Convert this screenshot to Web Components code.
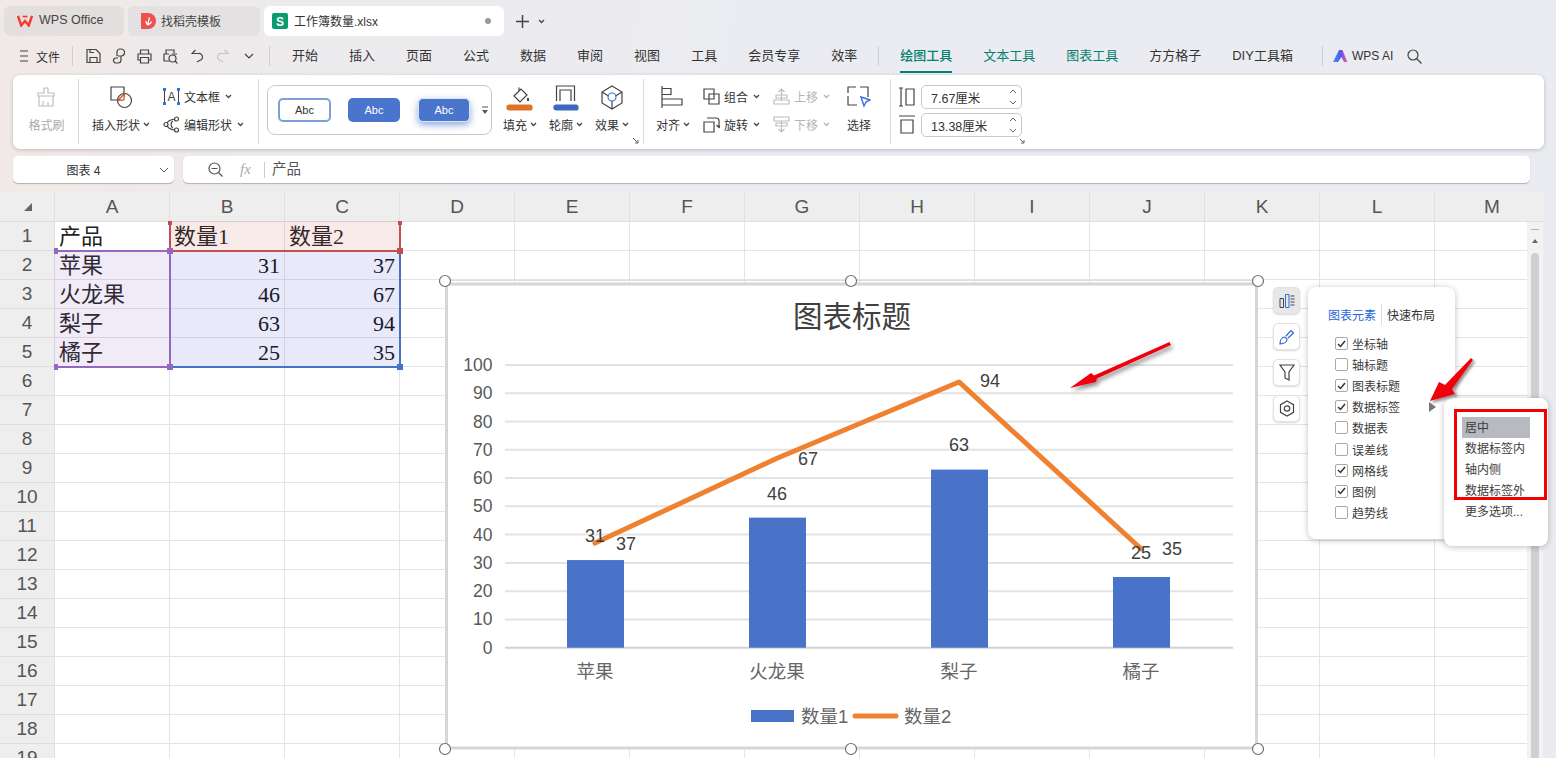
<!DOCTYPE html>
<html lang="zh">
<head>
<meta charset="utf-8">
<title>WPS</title>
<style>
  html, body { margin: 0; height: 100%; }
  body {
    width: 1556px; height: 758px; overflow: hidden;
    display: flex; flex-direction: column;
    background: linear-gradient(100deg, #f1e9e7 0, #ecebee 22%, #ebecf1 45%);
    font-family: "Liberation Sans", "Noto Sans CJK SC", sans-serif;
    color: #333;
  }
</style>
</head>
<body>
<wps-tabbar></wps-tabbar>
<wps-menubar></wps-menubar>
<wps-ribbon></wps-ribbon>
<wps-formula></wps-formula>
<wps-sheet></wps-sheet>

<script>
const caret = (c = "#444") => `<svg class="caret" width="7" height="5" viewBox="0 0 7 5"><path d="M1 1l2.5 2.5L6 1" fill="none" stroke="${c}" stroke-width="1.3"/></svg>`;

class WpsTabbar extends HTMLElement {
  constructor() {
    super();
    this.attachShadow({ mode: "open" });
    this.shadowRoot.innerHTML = `
      <style>
        :host { display: flex; height: 37px; padding: 6px 0 0 4px; box-sizing: border-box; gap: 4px; font-size: 12px; flex: none; }
        .tab { height: 30px; border-radius: 6px; background: #e3dfde; display: flex; align-items: center; box-sizing: border-box; color: #444; }
        .tab span { margin-bottom: 2px; }
        .a { width: 120px; padding-left: 13px; gap: 6px; font-size: 12.5px; }
        .b { width: 132px; padding-left: 13px; gap: 5px; background: #e4e1e2; }
        .c { width: 240px; padding-left: 8px; gap: 6px; background: #fff; color: #333; }
        .dot { width: 6px; height: 6px; border-radius: 50%; background: #999; margin-left: auto; margin-right: 13px; }
        .add { display: flex; align-items: center; gap: 8px; margin-left: 7px; }
      </style>
      <div class="tab a">
        <svg width="16" height="12" viewBox="0 0 16 12"><path d="M1 1l3.2 9.5L8 6l3.8 4.5L15 1" fill="none" stroke="#f4392d" stroke-width="2.4"/><path d="M5.5 1.5h5" stroke="#f4392d" stroke-width="1.6"/></svg>
        <span>WPS Office</span>
      </div>
      <div class="tab b">
        <svg width="15" height="16" viewBox="0 0 15 16"><path d="M0 0h7a8 8 0 0 1 0 16H0z" fill="#ef4f4f"/><path d="M7 12.5c0-3 .5-5 1.5-8M7 12c-1.5-1-2-2.200-2-4M7.500 11.500c1.500-.5 2.500-1.500 3-3" fill="none" stroke="#fff" stroke-width="1.3"/></svg>
        <span>找稻壳模板</span>
      </div>
      <div class="tab c">
        <svg width="16" height="16" viewBox="0 0 16 16"><rect width="16" height="16" rx="2" fill="#0a9b70"/><text x="8" y="12.500" text-anchor="middle" font-size="12" font-weight="700" fill="#fff" font-family="Liberation Sans">S</text></svg>
        <span>工作簿数量.xlsx</span>
        <i class="dot"></i>
      </div>
      <div class="add">
        <svg width="15" height="15" viewBox="0 0 15 15"><path d="M7.500 1v13M1 7.500h13" stroke="#444" stroke-width="1.500"/></svg>
        ${caret()}
      </div>`;
  }
}
customElements.define("wps-tabbar", WpsTabbar);

class WpsMenubar extends HTMLElement {
  constructor() {
    super();
    this.attachShadow({ mode: "open" });
    const tabs = ["开始", "插入", "页面", "公式", "数据", "审阅", "视图", "工具", "会员专享", "效率"];
    this.shadowRoot.innerHTML = `
      <style>
        :host { display: flex; align-items: center; height: 38px; flex: none; padding-left: 20px; box-sizing: border-box; font-size: 13px; color: #333; }
        svg { display: block; fill: none; stroke: #444; stroke-width: 1.200; }
        .file { font-size: 12px; margin-left: 8px; }
        .sep { width: 1px; height: 20px; background: #cfcfcf; flex: none; }
        .qa { display: flex; align-items: center; gap: 11px; margin: 0 15px 0 13px; }
        .tabs { display: flex; gap: 31px; }
        .tabs span { position: relative; line-height: 20px; }
        .teal { color: #05806f; }
        .on { color: #05806f; font-weight: 500; }
        .on::after { content: ""; position: absolute; left: 0; right: 0; bottom: -7px; height: 2px; background: #05806f; }
        .ai { display: flex; align-items: center; gap: 4px; font-size: 12px; margin-left: 10px; }
        .search { margin-left: 14px; }
      </style>
      <svg width="8" height="12" viewBox="0 0 8 12"><path d="M0 1h8M0 6h8M0 11h8"/></svg>
      <span class="file">文件</span>
      <i class="sep" style="margin-left:12px"></i>
      <div class="qa">
        <svg width="15" height="16" viewBox="0 0 15 16"><path d="M1 1.500h9l4 4v9H1zM4 14.500v-5h7v5M4 1.500v3h4"/></svg>
        <svg width="14" height="16" viewBox="0 0 14 16"><path d="M5 8V4a3 3 0 0 1 3-3h1a3.500 3.500 0 0 1 0 7H5.500M9 8v4a3 3 0 0 1-3 3H4a2.500 2.500 0 0 1 0-5h2"/></svg>
        <svg width="15" height="15" viewBox="0 0 15 15"><path d="M3.500 5V1h8v4M3.500 11H1V5h13v6h-2.500M3.500 8.500h8V14h-8z"/></svg>
        <svg width="15" height="15" viewBox="0 0 15 15"><path d="M3 5V1h8v3M6 12H1V5h5M9 5h5"/><circle cx="9.500" cy="9.500" r="3.500"/><path d="M12 12l2.500 2.500"/></svg>
        <svg width="12" height="14" viewBox="0 0 12 14" style="margin-left:2px"><path d="M4.500 1L1 4.500h6.500a3.500 3.500 0 0 1 1 7L6 13"/></svg>
        <svg width="12" height="14" viewBox="0 0 12 14" style="stroke:#c4c4c4;margin-left:3px"><path d="M7.500 1L11 4.500H4.500a3.500 3.500 0 0 0-1 7L6 13"/></svg>
        <svg width="10" height="6" viewBox="0 0 10 6" style="margin-left:4px"><path d="M1 1l4 4 4-4"/></svg>
      </div>
      <i class="sep"></i>
      <div class="tabs" style="margin-left:22px">
        ${tabs.map(t => `<span>${t}</span>`).join("")}
      </div>
      <i class="sep" style="margin:0 21px"></i>
      <div class="tabs">
        <span class="on">绘图工具</span><span class="teal">文本工具</span><span class="teal">图表工具</span><span>方方格子</span><span>DIY工具箱</span>
      </div>
      <i class="sep" style="margin-left:29px"></i>
      <div class="ai">
        <svg width="15" height="12" viewBox="0 0 15 12" style="stroke:none"><defs><linearGradient id="g" x1="0" x2="1"><stop offset="0" stop-color="#3f8cff"/><stop offset=".55" stop-color="#5a55e8"/><stop offset="1" stop-color="#ff5fa0"/></linearGradient></defs><path d="M0 12L6 0h3.500l5 12h-3.500L8.500 7 5 12z" fill="url(#g)"/></svg>
        <span>WPS AI</span>
      </div>
      <svg class="search" width="15" height="15" viewBox="0 0 15 15"><circle cx="6" cy="6" r="5"/><path d="M9.500 9.500l5 5"/></svg>`;
  }
}
customElements.define("wps-menubar", WpsMenubar);

// big ribbon button: icon on top, label under it
class RbBig extends HTMLElement {
  constructor() {
    super();
    this.attachShadow({ mode: "open" });
    this.shadowRoot.innerHTML = `
      <style>
        :host { display: flex; flex-direction: column; align-items: center; font-size: 12px; color: #333; flex: none; }
        :host([off]) { color: #aaa; }
        .ic { height: 34px; display: flex; align-items: center; justify-content: center; }
        .lb { height: 20px; display: flex; align-items: center; gap: 3px; white-space: nowrap; }
      </style>
      <div class="ic"><slot></slot></div>
      <div class="lb"><span></span>${this.hasAttribute("nocaret") ? "" : caret()}</div>`;
  }
  connectedCallback() {
    this.shadowRoot.querySelector(".lb span").textContent = this.getAttribute("label");
  }
}
customElements.define("rb-big", RbBig);

// small ribbon button: icon left, label right
class RbSmall extends HTMLElement {
  constructor() {
    super();
    this.attachShadow({ mode: "open" });
    this.shadowRoot.innerHTML = `
      <style>
        :host { display: flex; align-items: center; height: 20px; font-size: 12px; color: #333; white-space: nowrap; }
        :host([off]) { color: #b5b5b5; }
        .ic { display: flex; width: 21px; flex: none; }
        .cr { margin-left: 5px; display: flex; }
      </style>
      <div class="ic"><slot></slot></div>
      <span></span><div class="cr">${caret(this.hasAttribute("off") ? "#b5b5b5" : "#444")}</div>`;
  }
  connectedCallback() {
    this.shadowRoot.querySelector("span").textContent = this.getAttribute("label");
  }
}
customElements.define("rb-small", RbSmall);

class RbSize extends HTMLElement {
  constructor() {
    super();
    this.attachShadow({ mode: "open" });
    this.shadowRoot.innerHTML = `
      <style>
        :host { display: flex; align-items: center; width: 101px; height: 24px; box-sizing: border-box; border: 1px solid #c9c9c9; border-radius: 5px; padding-left: 9px; font-size: 12.500px; color: #333; }
        svg { margin-left: auto; margin-right: 3px; }
      </style>
      <span><slot></slot></span>
      <svg width="10" height="18" viewBox="0 0 10 18"><path d="M2 5l3-3 3 3M2 13l3 3 3-3" fill="none" stroke="#666"/></svg>`;
  }
}
customElements.define("rb-size", RbSize);

class WpsRibbon extends HTMLElement {
  constructor() {
    super();
    this.attachShadow({ mode: "open" });
    const launcher = `<svg class="launch" width="6" height="6" viewBox="0 0 6 6"><path d="M0 .5h1M1 1l4 4M5 2v3H2" fill="none" stroke="#666"/></svg>`;
    this.shadowRoot.innerHTML = `
      <style>
        :host { display: flex; height: 74px; flex: none; margin: 0 12px 0 13px; padding-top: 4px; box-sizing: border-box; background: #fff; border-radius: 7px; box-shadow: 0 1px 4px rgba(0,0,0,.2); }
        svg { display: block; }
        .i { fill: none; stroke: #444; stroke-width: 1.200; }
        .o { fill: none; stroke: #bdbdbd; stroke-width: 1.200; }
        .g { display: flex; height: 65px; border-right: 1px solid #dcdcdc; box-sizing: border-box; position: relative; flex: none; padding-top: 1px; }
        .col { display: flex; flex-direction: column; gap: 8px; padding-top: 6px; flex: none; }
        .launch { position: absolute; right: 4px; bottom: 0; }
        .gallery { width: 225px; height: 50px; margin: 5px 5px 0 8px; box-sizing: border-box; border: 1px solid #c9c9c9; border-radius: 8px; display: flex; align-items: center; padding: 0 0 0 10px; flex: none; }
        .abc { width: 53px; height: 24px; box-sizing: border-box; border-radius: 5px; font-size: 11px; display: flex; align-items: center; justify-content: center; flex: none; color: #fff; background: #4a75cc; }
        .abc.a1 { background: #fff; color: #333; border: 2px solid #7c9ed9; }
        .abc.a3 { border: 1px solid #dfe6f6; box-shadow: 0 3px 7px rgba(68,114,196,.6); }
        .size { display: flex; align-items: center; gap: 6px; height: 24px; }
      </style>
      <div class="g" style="width:66px;justify-content:center;padding-left:2px">
        <rb-big label="格式刷" off nocaret>
          <svg class="o" width="20" height="20" viewBox="0 0 20 20"><path d="M8 1h4v5h6v3H2V6h6zM3 9v10h14V9M7 14v5M12 15v4"/></svg>
        </rb-big>
      </div>
      <div class="g" style="width:180px">
        <rb-big label="插入形状" style="width:66px;margin-left:9px">
          <svg class="i" width="24" height="24" viewBox="0 0 24 24"><path d="M14 15H2V2h13v10"/><circle cx="15.500" cy="15.500" r="7"/><path d="M9.500 15h5.500V9z" stroke="#d4561c" fill="#fff"/></svg>
        </rb-big>
        <div class="col" style="margin-left:9px">
          <rb-small label="文本框">
            <svg width="17" height="17" viewBox="0 0 17 17"><path d="M1.500 2v13M15.500 2v13" stroke="#444"/><text x="8.500" y="13" font-size="12" text-anchor="middle" fill="#444" font-family="Liberation Sans">A</text><path d="M0 0h3v3H0zM14 0h3v3h-3zM0 14h3v3H0zM14 14h3v3h-3z" fill="#3a6fe0"/></svg>
          </rb-small>
          <rb-small label="编辑形状">
            <svg class="i" width="17" height="17" viewBox="0 0 17 17"><path d="M13 3C7 3 4 6 3.500 8.500 4 11 7 14 13 14"/><circle cx="13.500" cy="3" r="2" fill="#fff"/><circle cx="3" cy="8.500" r="2" fill="#fff"/><circle cx="13.500" cy="14" r="2" fill="#fff"/><path d="M8 8.500c0-2 1-3 2-3.500M8 8.500c0 2 1 3 2 3.500"/></svg>
          </rb-small>
        </div>
      </div>
      <div class="g" style="width:385px">
        <div class="gallery">
          <div class="abc a1">Abc</div>
          <div class="abc" style="margin-left:17px;width:52px">Abc</div>
          <div class="abc a3" style="margin-left:18px;width:52px">Abc</div>
          <svg style="margin-left:11px" width="9" height="9" viewBox="0 0 9 9"><path d="M1 1h6" stroke="#555"/><path d="M1 4h6L4 8z" fill="#555"/></svg>
        </div>
        <rb-big label="填充" style="width:46px">
          <svg class="i" style="margin-top:2px" width="28" height="28" viewBox="0 0 28 28"><path d="M8 12l7-7 6 6-7 7z"/><path d="M13 7V3.500"/><path d="M22 14v3" stroke-width="2"/><rect x="1" y="21" width="25" height="5" rx="2" fill="#dd7324" stroke="#dd7324"/></svg>
        </rb-big>
        <rb-big label="轮廓" style="width:46px">
          <svg class="i" style="margin-top:2px" width="28" height="28" viewBox="0 0 28 28"><path d="M4.500 17V2h18v15M8 17V6h11v11"/><rect x="2" y="21" width="24" height="5" rx="2" fill="#3d68bf" stroke="#3d68bf"/></svg>
        </rb-big>
        <rb-big label="效果" style="width:46px">
          <svg class="i" width="24" height="25" viewBox="0 0 24 25"><path d="M12 1l10 6v11l-10 6-10-6V7zM2 7l6.500 4M22 7l-6.500 4M12 16v8"/><circle cx="12" cy="12" r="4" stroke="#3a6fe0"/></svg>
        </rb-big>
        ${launcher}
      </div>
      <div class="g" style="width:247px">
        <rb-big label="对齐" style="width:46px;margin-left:6px">
          <svg class="i" width="24" height="22" viewBox="0 0 24 22"><path d="M1 0v22M1 2.500h9v6H1M1 13h20v6H1"/></svg>
        </rb-big>
        <div class="col" style="margin-left:7px;width:70px">
          <rb-small label="组合">
            <svg class="i" width="17" height="17" viewBox="0 0 17 17"><path d="M1 1h10v10H1zM6 6h10v10H6z"/></svg>
          </rb-small>
          <rb-small label="旋转">
            <svg class="i" width="17" height="17" viewBox="0 0 17 17"><path d="M1 6h10v10H1zM4 2h9a3 3 0 0 1 3 3v6M13.500 9l2.500 2.500L18 9"/></svg>
          </rb-small>
        </div>
        <div class="col" style="width:69px">
          <rb-small label="上移" off>
            <svg class="o" width="17" height="17" viewBox="0 0 17 17"><path d="M8.500 13V1M5.500 4l3-3 3 3M3 7h11v3H3zM1 12h15v4H1z"/></svg>
          </rb-small>
          <rb-small label="下移" off>
            <svg class="o" width="17" height="17" viewBox="0 0 17 17"><path d="M1 1h15v4H1zM3 7h11v3H3zM8.500 5v11M5.500 13l3 3 3-3"/></svg>
          </rb-small>
        </div>
        <rb-big label="选择" nocaret style="width:30px;margin-left:2px">
          <svg width="24" height="24" viewBox="0 0 24 24"><path class="i" d="M1 8V2h8M13 2h8v10M1 11v9h9"/><path d="M14 12l9 3-4 2-2 4z" fill="#fff" stroke="#3a6fe0" stroke-width="1.400"/></svg>
        </rb-big>
      </div>
      <div class="g" style="width:145px;border:0;padding:6px 0 0 8px;flex-direction:column;gap:4px">
        <div class="size">
          <svg class="i" width="16" height="20" viewBox="0 0 16 20"><path d="M0 1h4M0 19h4M2 1v18M7 2h8v16H7z"/></svg>
          <rb-size>7.67厘米</rb-size>
        </div>
        <div class="size">
          <svg class="i" width="16" height="20" viewBox="0 0 16 20"><path d="M0 1h16M2 5h12v13H2z"/></svg>
          <rb-size>13.38厘米</rb-size>
        </div>
        <svg class="launch" style="right:11px" width="6" height="6" viewBox="0 0 6 6"><path d="M1 1l4 4M5 2v3H2" fill="none" stroke="#666"/></svg>
      </div>`;
  }
}
customElements.define("wps-ribbon", WpsRibbon);

class WpsFormula extends HTMLElement {
  constructor() {
    super();
    this.attachShadow({ mode: "open" });
    this.shadowRoot.innerHTML = `
      <style>
        :host { display: flex; gap: 9px; height: 27px; margin: 7px 0 0 13px; flex: none; font-size: 12px; }
        .box { background: #fff; border-radius: 5px; box-shadow: 0 1px 1px rgba(0,0,0,.25); display: flex; align-items: center; box-sizing: border-box; }
        .name { width: 161px; position: relative; justify-content: center; padding-right: 20px; }
        .name svg { position: absolute; right: 5px; top: 11px; }
        .bar { width: 1347px; padding-left: 25px; color: #666; }
        .fx { font-family: "Liberation Serif", serif; font-style: italic; font-size: 15px; color: #aaa; margin-left: 17px; width: 18px; }
        .s { width: 1px; height: 16px; background: #ccc; margin: 0 7px 0 6px; }
        .t { font-size: 14.500px; color: #555; margin-bottom: 4px; }
      </style>
      <div class="box name">
        <span>图表 4</span>
        <svg width="10" height="6" viewBox="0 0 10 6"><path d="M1 1l4 4 4-4" fill="none" stroke="#666"/></svg>
      </div>
      <div class="box bar">
        <svg width="15" height="15" viewBox="0 0 15 15" fill="none" stroke="#555" stroke-width="1.200"><circle cx="6.500" cy="6.500" r="5.500"/><path d="M3.500 6.500h6M10.500 10.500l4 4"/></svg>
        <span class="fx">fx</span>
        <i class="s"></i>
        <span class="t">产品</span>
      </div>`;
  }
}
customElements.define("wps-formula", WpsFormula);

class WpsChart extends HTMLElement {
  constructor() {
    super();
    this.attachShadow({ mode: "open" });
    const y = v => 647.7 - v * 2.827;
    const cx = [595, 777, 959, 1141];
    const names = ["苹果", "火龙果", "梨子", "橘子"];
    const q1 = [31, 46, 63, 25], q2 = [37, 67, 94, 35];
    const labels = [[31,595,536],[37,626,544],[46,777,494],[67,808,459],[63,959,445],[94,990,381],[25,1141,553],[35,1172,549]];
    let grid = "", ticks = "";
    for (let v = 0; v <= 100; v += 10) {
      grid += `<line x1="505" x2="1233" y1="${y(v)}" y2="${y(v)}" stroke="${v ? "#e3e3e3" : "#d2d2d2"}" stroke-width="2"/>`;
      ticks += `<text x="492.500" y="${y(v)}" text-anchor="end" class="tick">${v}</text>`;
    }
    const handles = [[445,281],[851,281],[1258,281],[445,749],[851,749],[1258,749]]
      .map(([a, b]) => `<circle cx="${a}" cy="${b}" r="5.500" fill="#fff" stroke="#6f6f6f" stroke-width="1.200"/>`).join("");
    this.shadowRoot.innerHTML = `
      <style>
        :host { display: block; position: absolute; left: 438px; top: 82px; width: 827px; height: 484px; }
        svg { display: block; }
        text { dominant-baseline: central; font-family: "Liberation Sans", "Noto Sans CJK SC", sans-serif; }
        .tick { font-size: 17.500px; fill: #595959; }
        .lab { font-size: 18px; fill: #404040; }
        .cat { font-size: 18.500px; fill: #666; }
      </style>
      <svg width="827" height="484" viewBox="438 274 827 484">
        <defs><filter id="sh" x="-20%" y="-40%" width="140%" height="200%"><feDropShadow dx="2" dy="3" stdDeviation="2" flood-color="#000" flood-opacity=".45"/></filter></defs>
        <path d="M445 280.500H1258" stroke="#dcdcdc"/>
        <rect x="446.500" y="284" width="810" height="464" fill="#fff" stroke="#d6d6d6" stroke-width="3"/>
        <text x="852" y="316" text-anchor="middle" font-size="29.500" fill="#404040">图表标题</text>
        ${grid}${ticks}
        ${cx.map((c, i) => `<rect x="${c - 28}" y="${y(q1[i])}" width="57" height="${q1[i] * 2.827}" fill="#4873c8"/>`).join("")}
        <polyline points="${cx.map((c, i) => c + "," + y(q2[i])).join(" ")}" fill="none" stroke="#ef8230" stroke-width="5" stroke-linecap="round" stroke-linejoin="round"/>
        ${labels.map(([t, a, b]) => `<text class="lab" x="${a}" y="${b}" text-anchor="middle">${t}</text>`).join("")}
        ${cx.map((c, i) => `<text class="cat" x="${c}" y="671" text-anchor="middle">${names[i]}</text>`).join("")}
        <rect x="751" y="710" width="43" height="12" fill="#4873c8"/>
        <text class="cat" x="801" y="716">数量1</text>
        <line x1="855" x2="896" y1="716" y2="716" stroke="#ef8230" stroke-width="5" stroke-linecap="round"/>
        <text class="cat" x="904" y="716">数量2</text>
        ${handles}
        <path d="M1169.500 342L1171 345 1097 378.500 1096 382 1070 388 1091 373 1094 375.500z" fill="#f00510" filter="url(#sh)"/>
      </svg>`;
  }
}
customElements.define("wps-chart", WpsChart);

class ChartCheck extends HTMLElement {
  constructor() {
    super();
    this.attachShadow({ mode: "open" });
    this.shadowRoot.innerHTML = `
      <style>
        :host { display: flex; align-items: center; gap: 4px; height: 21.120px; font-size: 12px; color: #3c3c3c; }
        .b { width: 13px; height: 13px; box-sizing: border-box; border: 1px solid #a9a9a9; border-radius: 2px; display: flex; align-items: center; justify-content: center; }
      </style>
      <div class="b">${this.hasAttribute("on") ? `<svg width="9" height="8" viewBox="0 0 9 8"><path d="M1 4l2.500 2.500L8 1" fill="none" stroke="#333" stroke-width="1.500"/></svg>` : ""}</div>
      <span><slot></slot></span>`;
  }
}
customElements.define("chart-check", ChartCheck);

class ChartTools extends HTMLElement {
  constructor() {
    super();
    this.attachShadow({ mode: "open" });
    this.shadowRoot.innerHTML = `
      <style>
        :host { display: block; }
        .tools { position: absolute; left: 1273px; top: 95px; display: flex; flex-direction: column; gap: 9px; }
        .tools div { width: 27px; height: 27px; box-sizing: border-box; background: #fff; border: 1px solid #e2e2e2; border-radius: 5px; box-shadow: 0 1px 2px rgba(0,0,0,.15); display: flex; align-items: center; justify-content: center; }
        .tools .on { background: #e8e8e8; }
        .panel { position: absolute; left: 1308px; top: 95px; width: 147px; height: 252px; box-sizing: border-box; padding: 17px 0 0 27px; background: #fff; border-radius: 8px; box-shadow: 0 1px 6px rgba(0,0,0,.25); }
        .head { display: flex; align-items: center; font-size: 12px; margin: 0 0 8px -7px; height: 21px; }
        .head b { font-weight: 400; color: #1f66d8; }
        .head i { width: 1px; height: 21px; background: #ddd; margin: 0 5px; }
        .sub { position: absolute; left: 1444px; top: 206px; width: 104px; height: 148px; box-sizing: border-box; padding: 19px 0 0 18px; background: #fff; border-radius: 8px; box-shadow: 0 1px 6px rgba(0,0,0,.25); font-size: 12px; color: #3c3c3c; }
        .sub div { width: 68px; height: 21px; line-height: 23px; padding-left: 3px; box-sizing: border-box; white-space: nowrap; }
        .sub .cur { background: #b8bac2; }
        .red { position: absolute; left: 10px; top: 11px; width: 93px; height: 91px; box-sizing: border-box; border: 3px solid #f40000; pointer-events: none; }
        .tri { position: absolute; left: 1429px; top: 210px; width: 0; height: 0; border-left: 7px solid #777; border-top: 5px solid transparent; border-bottom: 5px solid transparent; }
        .arrow { position: absolute; left: 1420px; top: 150px; overflow: visible; }
      </style>
      <div class="tools">
        <div class="on"><svg width="16" height="14" viewBox="0 0 16 14" fill="none" stroke="#444"><path d="M1 4.500h3.500v9H1z"/><path d="M6.500 .5H10v13H6.500z" stroke="#2f6fe0"/><path d="M11.500 2h4M11.500 5h4M11.500 8h4M11.500 11h4"/></svg></div>
        <div><svg width="16" height="16" viewBox="0 0 16 16" fill="none" stroke="#3460cc" stroke-width="1.200"><path d="M1 15c0-4 2-7 5-7l2 2c0 3-3 5-7 5zM7 7l5-5.500 2.500 2.500L9 9"/></svg></div>
        <div><svg width="16" height="17" viewBox="0 0 16 17" fill="none" stroke="#444" stroke-width="1.200"><path d="M1 1h14L10 8v8l-4-2V8z"/></svg></div>
        <div><svg width="16" height="17" viewBox="0 0 16 17" fill="none" stroke="#444" stroke-width="1.200"><path d="M8 1l6.500 3.700v7.600L8 16l-6.500-3.700V4.700z"/><circle cx="8" cy="8.500" r="2.700"/></svg></div>
      </div>
      <div class="panel">
        <div class="head"><b>图表元素</b><i></i><span>快速布局</span></div>
        <chart-check on>坐标轴</chart-check>
        <chart-check>轴标题</chart-check>
        <chart-check on>图表标题</chart-check>
        <chart-check on>数据标签</chart-check>
        <chart-check>数据表</chart-check>
        <chart-check>误差线</chart-check>
        <chart-check on>网格线</chart-check>
        <chart-check on>图例</chart-check>
        <chart-check>趋势线</chart-check>
      </div>
      <i class="tri"></i>
      <div class="sub">
        <div class="cur">居中</div>
        <div>数据标签内</div>
        <div>轴内侧</div>
        <div>数据标签外</div>
        <div>更多选项...</div>
        <span class="red"></span>
      </div>
      <svg class="arrow" width="60" height="70" viewBox="1420 342 60 70">
        <defs><filter id="s2" x="-40%" y="-40%" width="200%" height="200%"><feDropShadow dx="2" dy="2" stdDeviation="1.500" flood-color="#000" flood-opacity=".45"/></filter></defs>
        <path d="M1471 358L1473 360 1452 389 1455 394 1430 401 1439 382 1445 385z" fill="#f00510" filter="url(#s2)"/>
      </svg>`;
  }
}
customElements.define("chart-tools", ChartTools);

class WpsSheet extends HTMLElement {
  constructor() {
    super();
    this.attachShadow({ mode: "open" });
    const cols = "ABCDEFGHIJKLM".split("");
    const data = {
      A1: "产品", B1: "数量1", C1: "数量2",
      A2: "苹果", B2: 31, C2: 37,
      A3: "火龙果", B3: 46, C3: 67,
      A4: "梨子", B4: 63, C4: 94,
      A5: "橘子", B5: 25, C5: 35,
    };
    let cells = `<div class="hd corner"><svg width="10" height="10" viewBox="0 0 10 10"><path d="M9 1v8H1z" fill="#666"/></svg></div>`;
    cols.forEach(c => { cells += `<div class="hd">${c}</div>`; });
    for (let r = 1; r <= 19; r++) {
      cells += `<div class="hd rw">${r}</div>`;
      cols.forEach(c => {
        const v = data[c + r];
        cells += `<div class="c${typeof v === "number" ? " n" : ""}">${v === undefined ? "" : v}</div>`;
      });
    }
    this.shadowRoot.innerHTML = `
      <style>
        :host { display: block; position: relative; height: 566px; margin-top: 9px; flex: none; overflow: hidden; }
        .wrap { width: 1543px; height: 566px; overflow: hidden; background: #fff; }
        .grid { display: grid; grid-template-columns: 55px repeat(13, 115px); grid-template-rows: 30px repeat(19, 29px); position: relative; }
        .hd { background: #eee; border-right: 1px solid #e0e0e0; border-bottom: 1px solid #dedede; box-sizing: border-box; display: flex; align-items: center; justify-content: center; font-size: 19px; color: #555; }
        .corner svg { margin: 0 0 0 1px; }
        .c { border-right: 1px solid #e4e4e4; border-bottom: 1px solid #e4e4e4; box-sizing: border-box; font: 22px/27px "Liberation Serif", "Noto Sans CJK SC", serif; color: #222; padding: 1px 4px 0; white-space: nowrap; }
        .c.n { text-align: right; color: #111; }
        .range { box-sizing: border-box; position: absolute; left: -1px; right: -1px; top: -1px; bottom: -1px; pointer-events: none; }
        .range i { position: absolute; width: 6px; height: 6px; }
        .blue { grid-column: 3 / 5; grid-row: 3 / 7; background: rgba(70,90,205,.125); border-right: 2px solid #4472c4; border-bottom: 2px solid #4472c4; }
        .blue i { background: #4472c4; right: -4px; bottom: -4px; }
        .redr { grid-column: 3 / 5; grid-row: 2 / 3; background: rgba(192,80,77,.12); border: 2px solid #c0504d; border-top: 0; }
        .redr i { background: #c0504d; }
        .purple { grid-column: 2 / 3; grid-row: 3 / 7; background: rgba(150,102,195,.13); border: 2px solid #9666c3; border-left: 0; }
        .purple i { background: #9666c3; }
        .bar { position: absolute; left: 1527px; top: 30px; width: 16px; height: 536px; background: #f2f2f2; }
        .bar u { position: absolute; left: 4px; top: 7px; width: 8px; height: 1px; background: #b5b5b5; }
        .bar b { position: absolute; left: 5px; top: 17px; border-left: 3px solid transparent; border-right: 3px solid transparent; border-bottom: 4px solid #666; }
        .bar em { position: absolute; left: 4px; top: 31px; width: 8px; height: 520px; background: #cfd0d4; border-radius: 4px; }
      </style>
      <div class="wrap">
        <div class="grid">
          ${cells}
          <div class="range blue"><i></i></div>
          <div class="range redr">
            <i style="left:-3px;top:0;width:4px;height:4px"></i><i style="right:-3px;top:0;width:4px;height:4px"></i>
            <i style="right:-4px;bottom:-4px"></i>
          </div>
          <div class="range purple">
            <i style="left:0;top:-4px;width:4px;height:6px"></i><i style="left:0;bottom:-4px;width:4px;height:6px"></i>
            <i style="right:-4px;top:-4px"></i><i style="right:-4px;bottom:-4px"></i>
          </div>
        </div>
      </div>
      <div class="bar"><u></u><b></b><em></em></div>
      <wps-chart></wps-chart>
      <chart-tools></chart-tools>`;
  }
}
customElements.define("wps-sheet", WpsSheet);
</script>
</body>
</html>
